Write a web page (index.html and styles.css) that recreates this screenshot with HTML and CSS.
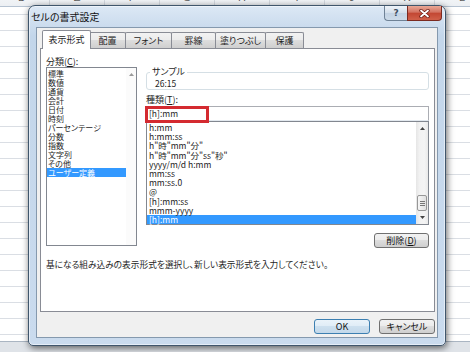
FILE: index.html
```html
<!DOCTYPE html>
<html lang="ja">
<head>
    <meta charset="utf-8">
    <title>セルの書式設定</title>
    <link rel="stylesheet" href="styles.css">
</head>
<body>
    <div class="sheet">
        <div class="grid">
            <div class="col-heads">
                <span>D</span><span>E</span><span>F</span><span>G</span><span>H</span><span>I</span><span>J</span><span>K</span><span>L</span>
            </div>
        </div>
        <div class="tabbar"><span class="sheet-tab">1</span></div>
    </div>

    <div class="dialog">
        <div class="titlebar">
            <span class="title">セルの書式設定</span>
            <div class="caption-btns">
                <span class="help">?</span>
                <span class="close">
                    <svg width="11" height="9" viewBox="0 0 11 9"><path d="M2 1.5 L9 7.5 M9 1.5 L2 7.5" stroke="#6b1a12" stroke-width="3.4" stroke-linecap="round"/><path d="M2 1.5 L9 7.5 M9 1.5 L2 7.5" stroke="#fff" stroke-width="1.8" stroke-linecap="round"/></svg>
                </span>
            </div>
        </div>
        <div class="client">
            <div class="tabs">
                <span class="tab active">表示形式</span>
                <span class="tab t-align">配置</span>
                <span class="tab t-font">フォント</span>
                <span class="tab t-border">罫線</span>
                <span class="tab t-fill">塗りつぶし</span>
                <span class="tab t-protect">保護</span>
            </div>
            <div class="panel">
                <div class="cols">
                    <div class="left">
                        <div class="label">分類(<u>C</u>):</div>
                        <div class="listbox cat">
                            <ul>
                                <li>標準</li>
                                <li>数値</li>
                                <li>通貨</li>
                                <li>会計</li>
                                <li>日付</li>
                                <li>時刻</li>
                                <li>パーセンテージ</li>
                                <li>分数</li>
                                <li>指数</li>
                                <li>文字列</li>
                                <li>その他</li>
                                <li class="sel">ユーザー定義</li>
                            </ul>
                            <div class="vscroll faint">
                                <span class="arr"><svg width="5" height="3" viewBox="0 0 5 3"><path d="M0 3 L2.5 0 L5 3Z" fill="#9a9a9a"/></svg></span>
                            </div>
                        </div>
                    </div>
                    <div class="right">
                        <fieldset class="sample">
                            <legend>サンプル</legend>
                            <div class="sample-value">26:15</div>
                        </fieldset>
                        <div class="label type-label">種類(<u>T</u>):</div>
                        <div class="type-input">
                            <span>[h]:mm</span>
                            <i class="mark"></i>
                        </div>
                        <div class="listbox fmt">
                            <ul>
                                <li>h:mm</li>
                                <li>h:mm:ss</li>
                                <li>h"時"mm"分"</li>
                                <li>h"時"mm"分"ss"秒"</li>
                                <li>yyyy/m/d h:mm</li>
                                <li>mm:ss</li>
                                <li>mm:ss.0</li>
                                <li>@</li>
                                <li>[h]:mm:ss</li>
                                <li>mmm-yyyy</li>
                                <li class="sel">[h]:mm</li>
                            </ul>
                            <div class="vscroll">
                                <span class="arr"><svg width="5" height="3" viewBox="0 0 5 3"><path d="M0 3 L2.5 0 L5 3Z" fill="#444"/></svg></span>
                                <div class="track"><span class="thumb"><i></i><i></i><i></i></span></div>
                                <span class="arr"><svg width="5" height="3" viewBox="0 0 5 3"><path d="M0 0 L2.5 3 L5 0Z" fill="#444"/></svg></span>
                            </div>
                        </div>
                        <div class="del-row"><button class="btn">削除(<u>D</u>)</button></div>
                    </div>
                </div>
                <p class="hint">基になる組み込みの表示形式を選択し、新しい表示形式を入力してください。</p>
            </div>
            <div class="footer">
                <button class="btn default">OK</button>
                <button class="btn">キャンセル</button>
            </div>
        </div>
    </div>
</body>
</html>
```

FILE: styles.css
```css
* {
    box-sizing: border-box;
}
body {
    margin: 0;
    font-family: "Noto Sans CJK JP", "Noto Sans", sans-serif;
    font-feature-settings: "palt";
    color: #1e1e1e;
}

/* spreadsheet behind the dialog */
.sheet {
    width: 470px;
    height: 352px;
    overflow: hidden;
    display: flex;
    flex-direction: column;
}
.grid {
    flex: 1;
    background-color: #fff;
    background-image: repeating-linear-gradient(transparent 0 14px, #dadee4 14px 15px, transparent 15px 16px);
}
.col-heads {
    display: flex;
    margin: -13px 0 0 -5px;
}
.col-heads span {
    flex: 0 0 55px;
    height: 20px;
    border-right: 1px solid #d3d8de;
    border-bottom: 1px solid #b5c2d1;
    background: linear-gradient(#fafbfc, #eceff3);
    text-align: center;
    font: 11px/20px "Liberation Sans", sans-serif;
    color: #5a5a5a;
}
.tabbar {
    height: 11px;
    background: #dfe3e8;
    border-top: 1px solid #aab5c2;
}
.sheet-tab {
    display: inline-block;
    width: 11px;
    height: 10px;
    border-right: 1px solid #8f9aa6;
    transform: skewX(30deg);
    font: 7px/10px "Liberation Sans", sans-serif;
    color: #555;
    padding-left: 1px;
}

/* dialog window */
.dialog {
    position: absolute;
    left: 28px;
    top: 5px;
    width: 418px;
    height: 341px;
    border: 1px solid #40566c;
    border-radius: 7px 7px 5px 5px;
    background: linear-gradient(#dce8f5, #c3d6ea 30px, #cadbee);
    box-shadow: 1px 2px 7px rgba(0, 0, 0, 0.6), inset 0 0 0 1px rgba(255, 255, 255, 0.5);
    display: flex;
    flex-direction: column;
}
.titlebar {
    height: 21px;
    display: flex;
    justify-content: space-between;
    align-items: flex-start;
    padding-left: 2px;
}
.title {
    font-size: 10px;
    line-height: 12px;
    margin-top: 5px;
    color: #111;
}
.caption-btns {
    display: flex;
    margin-right: 3px;
}
.help,
.close {
    height: 15px;
    display: flex;
    align-items: center;
    justify-content: center;
}
.help {
    width: 23px;
    border: 1px solid #6f8296;
    border-top: none;
    border-right: none;
    border-radius: 0 0 0 4px;
    background: linear-gradient(#eef3f9, #d3dfeb 50%, #c2d2e3 50%, #cddbe9);
    font: bold 9px/13px "DejaVu Sans", sans-serif;
    color: #3d4e60;
}
.close {
    width: 35px;
    border: 1px solid #7b2a20;
    border-top: none;
    border-radius: 0 0 4px 0;
    background: linear-gradient(#e9a896, #d27160 45%, #c24632 50%, #d0604a);
}

.client {
    flex: 1;
    margin: 0 7px 7px 7px;
    border: 1px solid #8599ae;
    background: #f0f0f0;
    display: flex;
    flex-direction: column;
}

/* tabs */
.tabs {
    display: flex;
    align-items: flex-end;
    height: 20px;
    padding-left: 5px;
}
.tab {
    height: 16px;
    margin-left: -1px;
    border: 1px solid #898c95;
    border-bottom: none;
    border-radius: 2px 2px 0 0;
    background: linear-gradient(#f2f2f2, #ebebeb 50%, #dddddd 50%, #cfcfcf);
    font-size: 9px;
    line-height: 15px;
    text-align: center;
}
.tab.active {
    position: relative;
    z-index: 1;
    width: 49px;
    height: 19px;
    margin: 0 0 -1px 0;
    background: #fff;
    line-height: 18px;
}
.t-align { width: 37px; margin-left: -2px; }
.t-font { width: 47px; }
.t-border { width: 45px; }
.t-fill { width: 51px; }
.t-protect { width: 39px; }

.panel {
    height: 264px;
    margin: 0 2px 0 3px;
    border: 1px solid #898c95;
    background: #fff;
    padding: 7px 5px 0 5px;
}
.cols {
    display: grid;
    grid-template-columns: 91px 283px;
    column-gap: 9px;
}
.label {
    font-size: 9px;
    line-height: 11px;
}
u {
    text-decoration-thickness: 1px;
    text-underline-offset: 1px;
}

/* list boxes */
.listbox {
    display: flex;
    border: 1px solid #828790;
    background: #fff;
}
.listbox ul {
    flex: 1;
    list-style: none;
    margin: 0;
    padding: 1px 0 0 0;
}
.listbox li {
    white-space: nowrap;
}
.listbox li.sel {
    background: #3399ff;
    color: #fff;
}
.cat {
    height: 179px;
}
.cat li {
    height: 9px;
    line-height: 9px;
    font-size: 8px;
    padding-left: 1px;
}
.fmt {
    height: 104px;
}
.fmt li {
    height: 9.2px;
    line-height: 9.2px;
    font-size: 8.5px;
    padding-left: 2px;
    color: #222;
}
.vscroll {
    width: 12px;
    display: flex;
    flex-direction: column;
    background: linear-gradient(to right, #e6e6e6, #f2f2f2 30%, #f4f4f4 70%, #e9e9e9);
}
.vscroll.faint {
    width: 10px;
    background: #fbfbfb;
}
.arr {
    height: 13px;
    display: flex;
    align-items: center;
    justify-content: center;
}
.track {
    flex: 1;
    display: flex;
    flex-direction: column;
    justify-content: flex-end;
}
.thumb {
    height: 16px;
    margin: 0 1px;
    border: 1px solid #979797;
    border-radius: 2px;
    background: linear-gradient(to right, #f6f6f6, #e0e0e0);
    display: flex;
    flex-direction: column;
    justify-content: center;
    align-items: center;
    gap: 1px;
}
.thumb i {
    width: 5px;
    height: 1px;
    background: #777;
}

/* right column */
.sample {
    margin: 11px 0 0 0;
    min-width: 0;
    padding: 1px 8px 1px;
    border: 1px solid #d5dfe5;
    border-radius: 3px;
}
.sample legend {
    font-size: 9px;
    line-height: 10px;
    padding: 0 2px;
    margin-left: -5px;
}
.sample-value {
    font-size: 8.5px;
    line-height: 10px;
}
.type-label {
    margin-top: 4px;
}
.type-input {
    position: relative;
    height: 15px;
    margin-top: 1px;
    border: 1px solid #abadb3;
    border-bottom-color: #e3e9ef;
    padding-left: 2px;
    font-size: 8.5px;
    line-height: 13px;
}
.mark {
    position: absolute;
    left: -2px;
    top: -1px;
    width: 64px;
    height: 17px;
    border: 3px solid #d42a30;
}
.del-row {
    display: flex;
    justify-content: flex-end;
    margin-top: 8px;
}

/* buttons */
.btn {
    width: 55px;
    height: 15px;
    padding: 0;
    border: 1px solid #707070;
    border-radius: 3px;
    background: linear-gradient(#f2f2f2, #ebebeb 50%, #dddddd 50%, #cfcfcf);
    font-family: inherit;
    font-feature-settings: "palt";
    font-size: 9px;
    line-height: 13px;
    color: #111;
}
.btn.default {
    border-color: #3c7fb1;
    background: linear-gradient(#eaf3fa, #dfecf6 50%, #cde0ef 50%, #c3d8ea);
}

.hint {
    margin: 11px 0 0;
    font-size: 8.7px;
    line-height: 12px;
}
.footer {
    display: flex;
    justify-content: flex-end;
    gap: 9px;
    padding: 7px 2px 0 0;
}
.footer .btn {
    width: 56px;
}
```
